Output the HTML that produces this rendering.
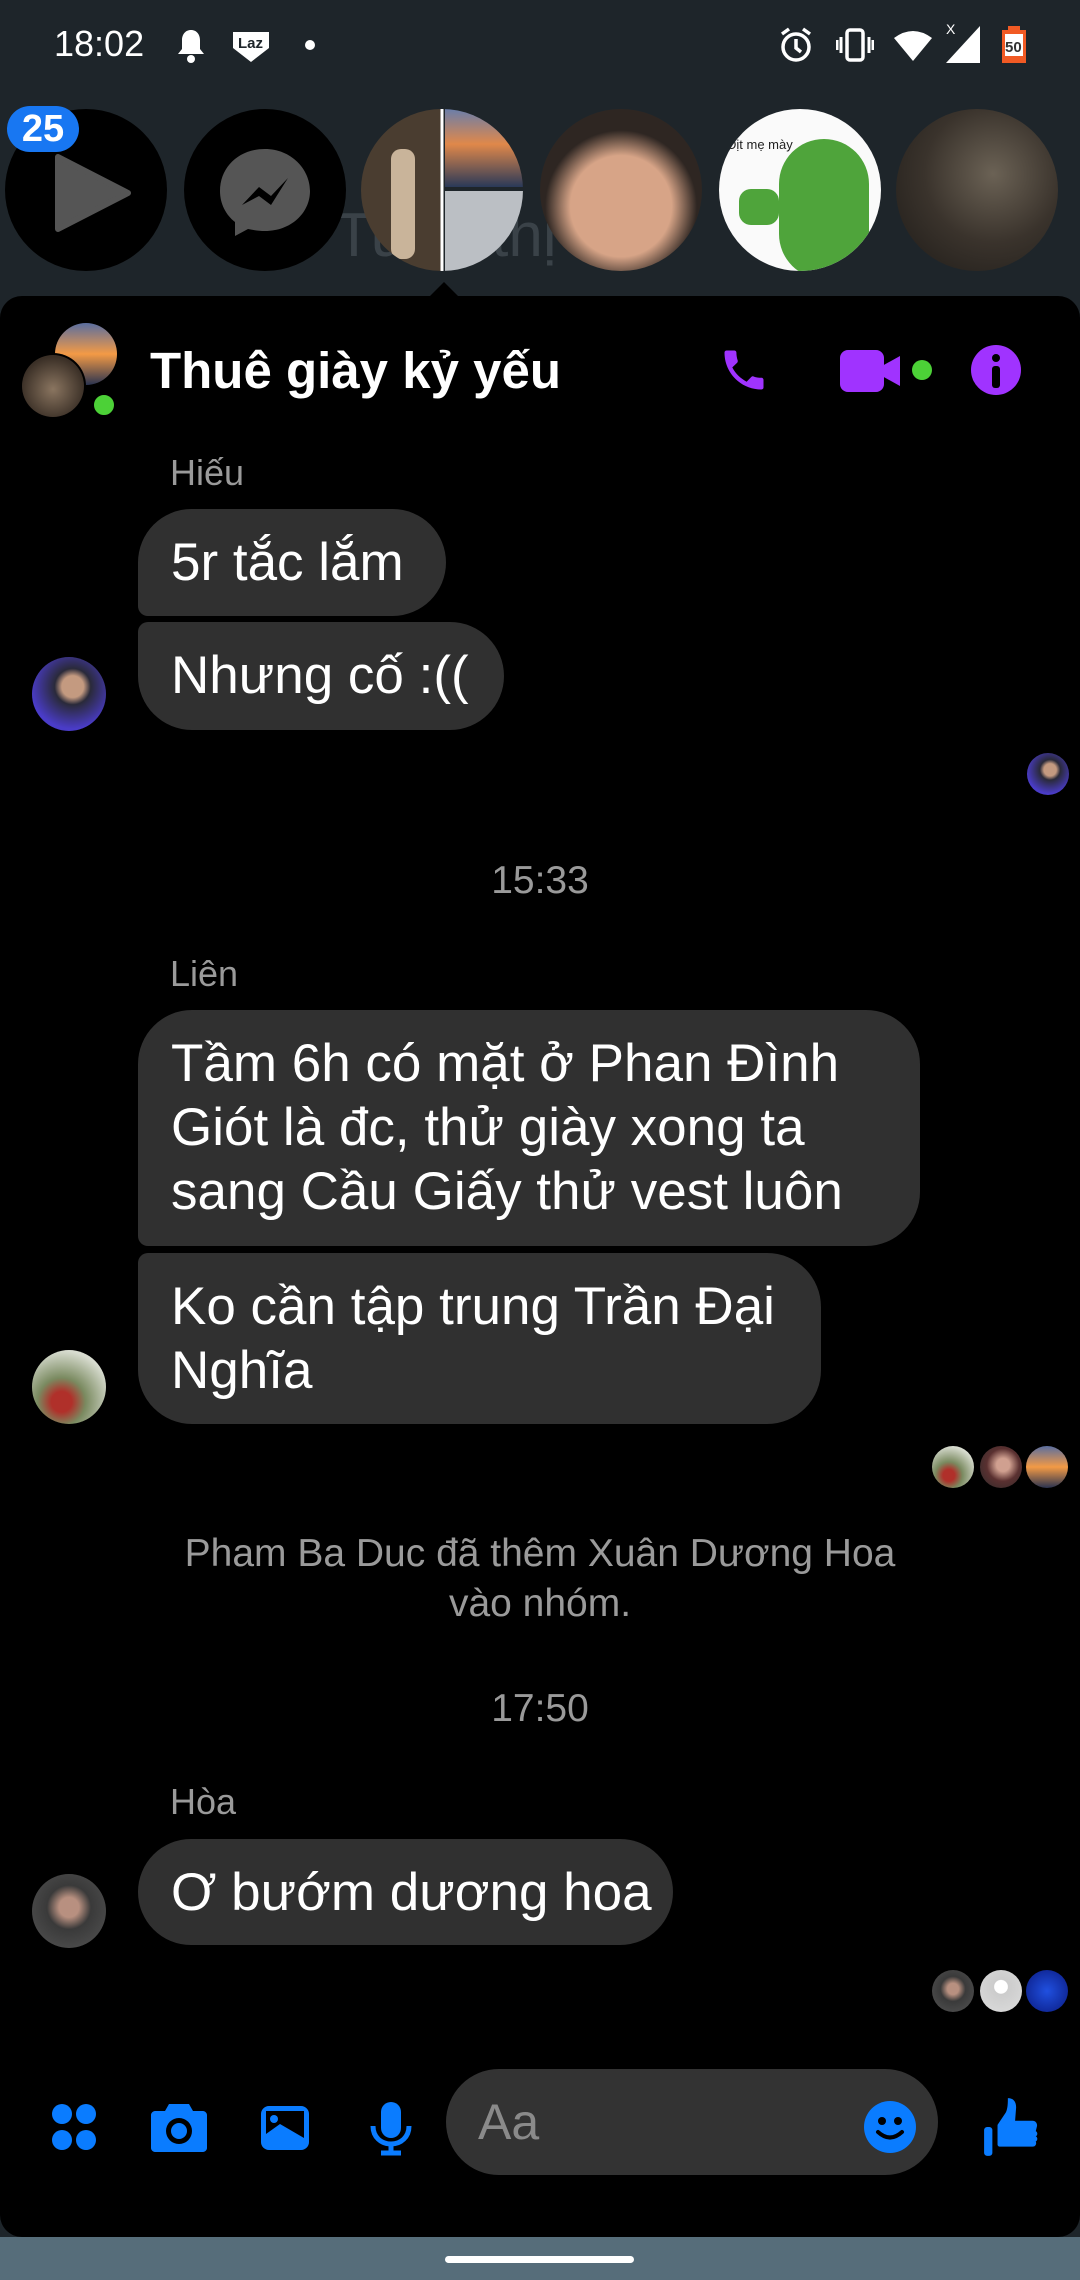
<!DOCTYPE html>
<html><head><meta charset="utf-8"><style>
*{margin:0;padding:0;box-sizing:border-box}
body{width:1080px;height:2280px;background:#1e252a;position:relative;overflow:hidden;font-family:"Liberation Sans",sans-serif;color:#fff}
.abs{position:absolute}
.story{position:absolute;top:109px;width:162px;height:162px;border-radius:50%;overflow:hidden}
.panel{position:absolute;left:0;top:296px;width:1080px;height:1941px;background:#000;border-radius:22px 22px 22px 22px}
.b{position:absolute;left:138px;background:#303030;font-size:53px;line-height:64px;padding:22px 0 0 33px;white-space:nowrap;color:#fff}
.lbl{position:absolute;left:170px;font-size:36px;color:#9a9a9a}
.ts{position:absolute;left:0;width:1080px;text-align:center;font-size:39px;color:#9a9a9a}
.av{position:absolute;left:32px;width:74px;height:74px;border-radius:50%}
.ra{position:absolute;width:42px;height:42px;border-radius:50%}
</style></head><body>
<!-- status bar -->
<div class="abs" style="left:54px;top:23px;font-size:36px;color:#fff">18:02</div>
<svg class="abs" style="left:176px;top:28px" width="30" height="36" viewBox="0 0 30 36"><path d="M15 2c-6 0-9 5-9 10v9l-4 5h26l-4-5v-9c0-5-3-10-9-10z" fill="#fff"/><circle cx="15" cy="31" r="4" fill="#fff"/></svg>
<svg class="abs" style="left:231px;top:28px" width="40" height="36" viewBox="0 0 40 36"><path d="M2 4h36v16L20 34 2 20z" fill="#fff"/><text x="7" y="20" font-size="15" font-weight="bold" fill="#1e252a" font-family="Liberation Sans">Laz</text></svg>
<div class="abs" style="left:305px;top:40px;width:10px;height:10px;border-radius:50%;background:#fff"></div>
<svg class="abs" style="left:778px;top:26px" width="36" height="38" viewBox="0 0 36 38"><circle cx="18" cy="21" r="13" fill="none" stroke="#fff" stroke-width="3.5"/><path d="M18 13v9l5 4M4 8l7-5M32 8l-7-5" stroke="#fff" stroke-width="3.5" fill="none"/></svg>
<svg class="abs" style="left:836px;top:28px" width="38" height="34" viewBox="0 0 38 34"><rect x="11" y="2" width="16" height="30" rx="3" fill="none" stroke="#fff" stroke-width="3.5"/><path d="M5 9v16M1 12v10M33 9v16M37 12v10" stroke="#fff" stroke-width="3"/></svg>
<svg class="abs" style="left:893px;top:30px" width="40" height="32" viewBox="0 0 40 32"><path d="M1 8Q20-6 39 8L20 31z" fill="#fff"/></svg>
<svg class="abs" style="left:942px;top:20px" width="40" height="44" viewBox="0 0 40 44"><path d="M38 6v37H4z" fill="#fff"/><text x="4" y="14" font-size="14" fill="#fff" font-family="Liberation Sans">X</text></svg>
<svg class="abs" style="left:1000px;top:26px" width="28" height="38" viewBox="0 0 28 38"><rect x="8" y="0" width="12" height="5" fill="#f15a24"/><rect x="2" y="4" width="24" height="33" fill="#f15a24"/><rect x="5" y="8" width="18" height="22" fill="#fff"/><text x="5" y="26" font-size="15" font-weight="bold" fill="#333" font-family="Liberation Sans">50</text></svg>

<!-- stories -->
<div class="abs" style="left:335px;top:200px;font-size:62px;color:#3a4248">Tu&nbsp;&nbsp;&nbsp;&nbsp;&nbsp;thị</div>
<div class="story" style="left:5px;background:#000"><svg width="162" height="162"><path d="M53 48v72l70-36z" fill="#555" stroke="#555" stroke-width="6" stroke-linejoin="round"/></svg></div>
<div class="abs" style="left:7px;top:106px;width:72px;height:46px;border-radius:23px;background:#1877f2;font-size:38px;font-weight:bold;text-align:center;line-height:46px">25</div>
<div class="story" style="left:184px;background:#000"><svg width="162" height="162"><path d="M81 40c-26 0-45 18-45 42 0 13 6 24 15 31v14l13-7c5 1 11 2 17 2 26 0 45-18 45-40S107 40 81 40z" fill="#555"/><path d="M58 96l17-18 12 9 17-18-17 27-12-9z" fill="#000"/></svg></div>
<div class="story" style="left:361px;background:linear-gradient(90deg,#4a3d30 0 49%,#fff 49% 51%,transparent 51%)"><div class="abs" style="left:84px;top:0;width:78px;height:78px;background:linear-gradient(180deg,#6a7eaa,#e0884a 45%,#2a3958)"></div><div class="abs" style="left:84px;top:82px;width:78px;height:80px;background:#bbbfc4"></div><div class="abs" style="left:30px;top:40px;width:24px;height:110px;background:#c9b49a;border-radius:10px"></div></div>
<div class="story" style="left:540px;background:radial-gradient(circle at 50% 60%,#d7a487 0 40%,#2e2622 60%)"></div>
<div class="story" style="left:719px;background:#fafafa"><div class="abs" style="left:60px;top:30px;width:90px;height:140px;border-radius:45px;background:#4fa43b"></div><div class="abs" style="left:20px;top:80px;width:40px;height:36px;border-radius:12px;background:#4fa43b"></div><div class="abs" style="left:8px;top:28px;font-size:13px;color:#222">Địt mẹ mày</div></div>
<div class="story" style="left:896px;background:radial-gradient(circle at 60% 40%,#6b6255,#3a332c 50%,#1d1a17)"></div>

<!-- panel -->
<div class="panel"></div>
<div class="abs" style="left:428px;top:282px;width:0;height:0;border-left:16px solid transparent;border-right:16px solid transparent;border-bottom:16px solid #000"></div>

<!-- header -->
<div class="abs" style="left:55px;top:323px;width:62px;height:62px;border-radius:50%;background:linear-gradient(180deg,#5a6ea0,#f39a45 50%,#2a3350)"></div>
<div class="abs" style="left:20px;top:353px;width:66px;height:66px;border-radius:50%;background:#000"></div>
<div class="abs" style="left:22px;top:355px;width:62px;height:62px;border-radius:50%;background:radial-gradient(circle at 50% 55%,#8a7560,#3a2f26 70%)"></div>
<div class="abs" style="left:91px;top:392px;width:26px;height:26px;border-radius:50%;background:#4cd137;border:3px solid #000"></div>
<div class="abs" style="left:150px;top:341px;font-size:51px;font-weight:bold">Thuê giày kỷ yếu</div>
<svg class="abs" style="left:718px;top:344px" width="52" height="52" viewBox="0 0 24 24"><path d="M6.6 10.8c1.4 2.8 3.8 5.1 6.6 6.6l2.2-2.2c.3-.3.7-.4 1-.2 1.1.4 2.3.6 3.6.6.6 0 1 .4 1 1V20c0 .6-.4 1-1 1C10.6 21 3 13.4 3 4c0-.6.4-1 1-1h3.5c.6 0 1 .4 1 1 0 1.3.2 2.5.6 3.6.1.3 0 .7-.2 1z" fill="#a033ff"/></svg>
<div class="abs" style="left:840px;top:350px;width:44px;height:42px;border-radius:8px;background:#a033ff"></div>
<svg class="abs" style="left:882px;top:356px" width="20" height="30"><path d="M0 10L18 0v30L0 20z" fill="#a033ff"/></svg>
<div class="abs" style="left:912px;top:360px;width:20px;height:20px;border-radius:50%;background:#4cd137"></div>
<div class="abs" style="left:971px;top:345px;width:50px;height:50px;border-radius:50%;background:#a033ff"></div>
<div class="abs" style="left:992px;top:354px;width:8px;height:8px;border-radius:50%;background:#000"></div>
<div class="abs" style="left:992px;top:366px;width:8px;height:22px;border-radius:3px;background:#000"></div>

<!-- messages -->
<div class="lbl" style="top:452px">Hiếu</div>
<div class="b" style="top:509px;width:308px;height:107px;border-radius:54px 54px 54px 10px">5r tắc lắm</div>
<div class="b" style="top:622px;width:366px;height:108px;border-radius:10px 54px 54px 54px">Nhưng cố :((</div>
<div class="av" style="top:657px;background:radial-gradient(circle at 55% 40%,#c49a80 0 18%,#2a2a3a 30%,#4a3cc8 70%)"></div>
<div class="ra" style="left:1027px;top:753px;background:radial-gradient(circle at 55% 40%,#c49a80 0 18%,#2a2a3a 30%,#4a3cc8 70%)"></div>

<div class="ts" style="top:859px">15:33</div>
<div class="lbl" style="top:953px">Liên</div>
<div class="b" style="top:1010px;width:782px;height:236px;border-radius:54px 54px 54px 10px">Tầm 6h có mặt ở Phan Đình<br>Gi&oacute;t là đc, thử giày xong ta<br>sang Cầu Giấy thử vest luôn</div>
<div class="b" style="top:1253px;width:683px;height:171px;border-radius:10px 54px 54px 54px">Ko cần tập trung Trần Đại<br>Nghĩa</div>
<div class="av" style="top:1350px;background:radial-gradient(circle at 40% 70%,#b0302a 0 15%,#7a8a60 35%,#d8dcd0 75%)"></div>
<div class="ra" style="left:932px;top:1446px;background:radial-gradient(circle at 40% 70%,#b0302a 0 15%,#7a8a60 35%,#d8dcd0 75%)"></div>
<div class="ra" style="left:980px;top:1446px;background:radial-gradient(circle at 55% 45%,#d0a090 0 20%,#5a3030 50%,#2a2a2a)"></div>
<div class="ra" style="left:1026px;top:1446px;background:linear-gradient(180deg,#5a6ea0,#f39a45 50%,#2a3350)"></div>

<div class="ts" style="top:1529px;line-height:50px">Pham Ba Duc đã thêm Xuân Dương Hoa<br>vào nhóm.</div>
<div class="ts" style="top:1687px">17:50</div>
<div class="lbl" style="top:1781px">Hòa</div>
<div class="b" style="top:1839px;width:535px;height:106px;border-radius:54px">Ơ bướm dương hoa</div>
<div class="av" style="top:1874px;background:radial-gradient(circle at 50% 45%,#b89080 0 18%,#3a3a3a 40%,#555)"></div>
<div class="ra" style="left:932px;top:1970px;background:radial-gradient(circle at 50% 45%,#b89080 0 18%,#3a3a3a 40%,#555)"></div>
<div class="ra" style="left:980px;top:1970px;background:radial-gradient(circle at 50% 40%,#fff 0 20%,#ccc 22%,#ddd)"></div>
<div class="ra" style="left:1026px;top:1970px;background:radial-gradient(circle,#2050e0,#0a1a80)"></div>

<!-- bottom bar -->
<svg class="abs" style="left:50px;top:2102px" width="48" height="50"><circle cx="12" cy="12" r="10" fill="#0a7cff"/><circle cx="36" cy="12" r="10" fill="#0a7cff"/><circle cx="12" cy="38" r="10" fill="#0a7cff"/><circle cx="36" cy="38" r="10" fill="#0a7cff"/></svg>
<svg class="abs" style="left:151px;top:2104px" width="56" height="48" viewBox="0 0 56 48"><path d="M18 0h20l4 7h10c2 0 4 2 4 4v33c0 2-2 4-4 4H4c-2 0-4-2-4-4V11c0-2 2-4 4-4h10z" fill="#0a7cff"/><circle cx="28" cy="27" r="13" fill="#000"/><circle cx="28" cy="27" r="8" fill="#0a7cff"/></svg>
<svg class="abs" style="left:259px;top:2104px" width="52" height="48" viewBox="0 0 52 48"><rect x="2" y="2" width="48" height="44" rx="8" fill="#0a7cff"/><rect x="7" y="7" width="38" height="30" fill="#000"/><circle cx="15" cy="15" r="4" fill="#0a7cff"/><path d="M7 37V30l14-10 24 14v3z" fill="#0a7cff"/></svg>
<svg class="abs" style="left:369px;top:2102px" width="44" height="54" viewBox="0 0 44 54"><rect x="12" y="0" width="20" height="36" rx="10" fill="#0a7cff"/><path d="M4 24c0 11 8 18 18 18s18-7 18-18" fill="none" stroke="#0a7cff" stroke-width="5"/><path d="M22 42v8M12 51h20" stroke="#0a7cff" stroke-width="5"/></svg>
<div class="abs" style="left:446px;top:2069px;width:492px;height:106px;border-radius:53px;background:#333"></div>
<div class="abs" style="left:478px;top:2093px;font-size:50px;color:#8a8a8a">Aa</div>
<svg class="abs" style="left:864px;top:2101px" width="52" height="52" viewBox="0 0 52 52"><circle cx="26" cy="26" r="26" fill="#0a7cff"/><circle cx="18" cy="20" r="4" fill="#000"/><circle cx="34" cy="20" r="4" fill="#000"/><path d="M14 31q12 11 24 0" fill="none" stroke="#000" stroke-width="4" stroke-linecap="round"/></svg>
<svg class="abs" style="left:984px;top:2096px" width="56" height="62" viewBox="0 0 54 60"><rect x="0" y="30" width="8" height="28" rx="3" fill="#0a7cff"/><path d="M13 28l8-12c2-4 2-10 2-14 5 0 8 3 8 9l-1 13h17c3 0 5 3 4 6l-1 4c2 1 2 4 0 5 2 1 2 4 0 5 1 2 0 5-3 5H15c-1 0-2-1-2-2z" fill="#0a7cff"/></svg>

<!-- nav -->
<div class="abs" style="left:0;top:2237px;width:1080px;height:43px;background:#566d7a"></div>
<div class="abs" style="left:445px;top:2256px;width:189px;height:7px;border-radius:4px;background:#fff"></div>
</body></html>
